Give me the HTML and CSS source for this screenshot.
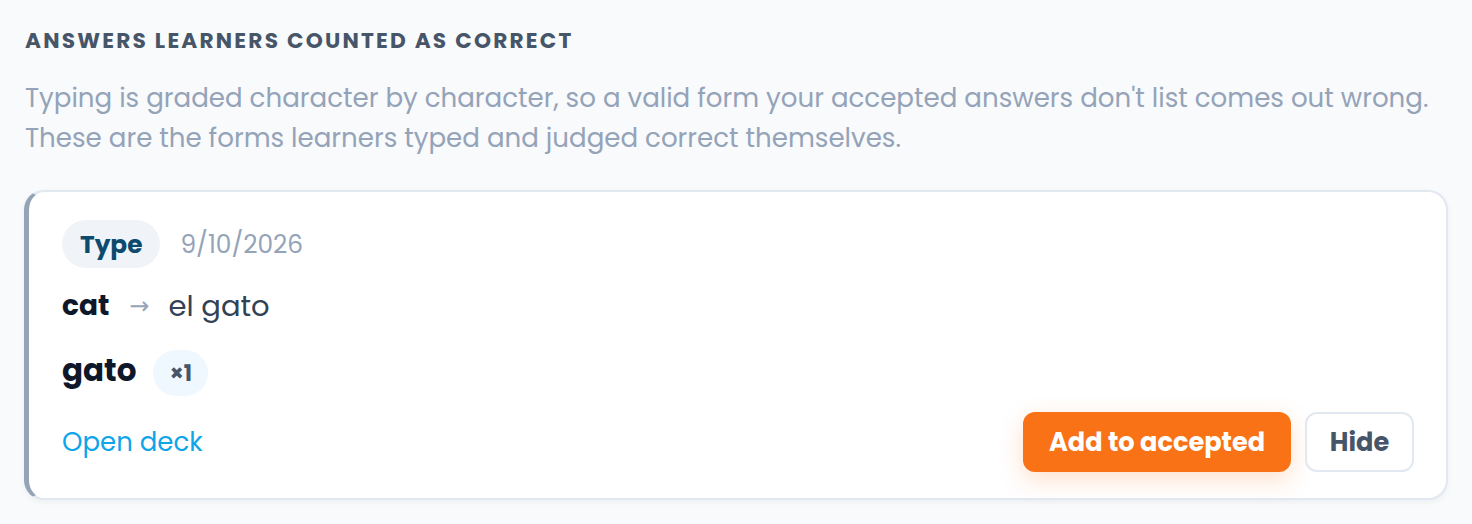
FILE: index.html
```html
<!DOCTYPE html>
<html lang="en">
<head>
<meta charset="utf-8">
<title>Answers learners counted as correct</title>
<link rel="stylesheet" href="styles.css">
</head>
<body>
<section class="section">
  <h2 class="eyebrow">Answers learners counted as correct</h2>
  <p class="desc">Typing is graded character by character, so a valid form your accepted answers don't list comes out wrong. These are the forms learners typed and judged correct themselves.</p>
  <article class="card">
    <div class="meta">
      <span class="mode-pill">Type</span>
      <span class="date">9/10/2026</span>
    </div>
    <div class="pair">
      <span class="prompt">cat</span>
      <span class="arrow">→</span>
      <span class="target">el gato</span>
    </div>
    <div class="answer">
      <span class="answer-text">gato</span>
      <span class="count-pill">×1</span>
    </div>
    <div class="footer">
      <a class="deck-link" href="#">Open deck</a>
      <div class="actions">
        <button class="btn btn-primary" type="button">Add to accepted</button>
        <button class="btn btn-ghost" type="button">Hide</button>
      </div>
    </div>
  </article>
</section>
</body>
</html>
```

FILE: styles.css
```css
* { box-sizing: border-box; }

html, body {
  margin: 0;
  background: #f8fafc;
}

body {
  font-family: "Poppins", "Inter", "Open Sans", sans-serif;
  color: #0f172a;
}

.section {
  padding: 29px 24px 24px 24px;
}

.eyebrow {
  margin: 0 0 0 1px;
  font-size: 21.7px;
  line-height: 24px;
  font-weight: 700;
  letter-spacing: 2.2px;
  text-transform: uppercase;
  color: #475569;
}

.desc {
  margin: 25px 0 0 1px;
  font-size: 26.1px;
  line-height: 40px;
  color: #94a3b8;
  max-width: 1420px;
}

.card {
  margin-top: 32px;
  background: #ffffff;
  border: 2px solid #e2e8f0;
  border-left: 5px solid #94a3b8;
  border-radius: 20px;
  padding: 28px 32px 26px 33px;
  box-shadow: 0 2px 6px rgba(15, 23, 42, 0.05);
}

.meta {
  display: flex;
  align-items: center;
  gap: 20px;
  height: 48px;
}

.mode-pill {
  display: inline-flex;
  align-items: center;
  height: 48px;
  padding: 0 18px;
  border-radius: 999px;
  background: #f0f4f8;
  color: #0c4a6e;
  font-weight: 700;
  font-size: 24.8px;
}

.date {
  font-size: 24.8px;
  color: #94a3b8;
}

.pair {
  display: flex;
  align-items: center;
  margin-top: 18px;
  height: 40px;
  line-height: 40px;
}

.prompt {
  font-size: 28px;
  font-weight: 700;
  color: #0f172a;
}

.arrow {
  margin: 0 19px 0 20px;
  font-family: "DejaVu Sans", sans-serif;
  font-size: 24px;
  color: #94a3b8;
}

.target {
  font-size: 29px;
  color: #334155;
}

.answer {
  display: flex;
  align-items: baseline;
  gap: 17px;
  margin-top: 24px;
}

.answer-text {
  font-size: 31px;
  line-height: 1;
  font-weight: 700;
  color: #0f172a;
}

.count-pill {
  display: inline-flex;
  align-items: center;
  justify-content: center;
  width: 55px;
  height: 46px;
  border-radius: 999px;
  background: #eff7ff;
  color: #475569;
  font-size: 22px;
  font-weight: 700;
}

.footer {
  display: flex;
  align-items: center;
  justify-content: space-between;
  margin-top: 16px;
}

.deck-link {
  font-size: 26px;
  color: #0ea5e9;
  text-decoration: none;
}

.actions {
  display: flex;
  gap: 14px;
}

.btn {
  height: 60px;
  border-radius: 12px;
  font-family: inherit;
  font-size: 25.6px;
  font-weight: 700;
  cursor: pointer;
}

.btn-primary {
  padding: 0 25px;
  width: 268px;
  border: none;
  background: #f97316;
  color: #ffffff;
  box-shadow: 0 8px 24px rgba(249, 115, 22, 0.22);
}

.btn-ghost {
  padding: 0 22px;
  width: 109px;
  border: 2px solid #e2e8f0;
  background: #ffffff;
  color: #475569;
}
```
